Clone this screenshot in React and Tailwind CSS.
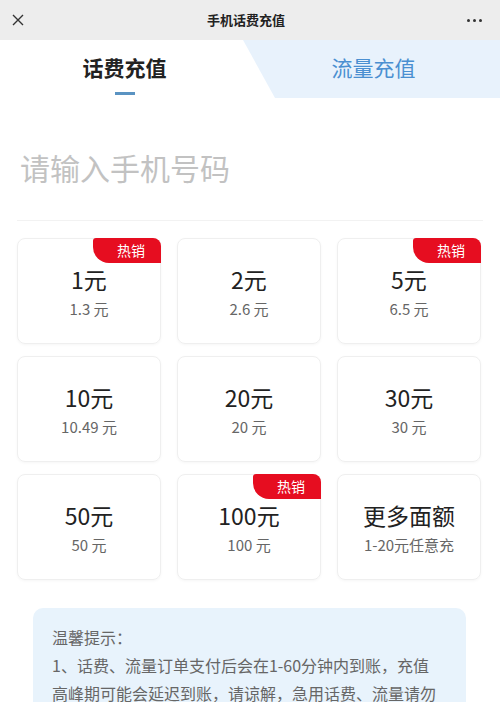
import React from 'react'

const CARDS = [
  { price: '1元', sub: '1.3 元', hot: true },
  { price: '2元', sub: '2.6 元' },
  { price: '5元', sub: '6.5 元', hot: true },
  { price: '10元', sub: '10.49 元' },
  { price: '20元', sub: '20 元' },
  { price: '30元', sub: '30 元' },
  { price: '50元', sub: '50 元' },
  { price: '100元', sub: '100 元', hot: true },
  { price: '更多面额', sub: '1-20元任意充' },
]

const font = { fontFamily: '"Noto Sans CJK SC", "Noto Sans", sans-serif' }

export default function App() {
  return (
    <div className="w-[500px] h-[702px] overflow-hidden bg-white" style={font}>
      {/* top bar */}
      <div className="h-10 bg-[#ededed] flex items-center justify-between px-[10px]">
        <svg width="14" height="14" viewBox="0 0 14 14" className="ml-[1px]">
          <path d="M2 2 L12 12 M12 2 L2 12" stroke="#333" strokeWidth="1.4" fill="none" />
        </svg>
        <div className="text-[13px] font-bold text-[#222]">手机话费充值</div>
        <div className="flex gap-[3px] mr-[8px]">
          <span className="w-[3px] h-[3px] rounded-full bg-[#333]" />
          <span className="w-[3px] h-[3px] rounded-full bg-[#333]" />
          <span className="w-[3px] h-[3px] rounded-full bg-[#333]" />
        </div>
      </div>

      {/* tabs */}
      <div className="flex h-[58px]">
        <div className="w-[243px] flex flex-col items-center pt-[12px]">
          <div className="text-[21px] leading-[30px] font-bold text-[#222] pl-[6px]">话费充值</div>
          <div className="mt-[10px] w-[20px] h-[3px] bg-[#5a93c2] ml-[6px]" />
        </div>
        <div className="flex-1 bg-[#e8f2fc] [clip-path:polygon(0_0,100%_0,100%_100%,32px_100%)] flex justify-center pt-[12px]">
          <div className="text-[21px] leading-[30px] text-[#4a8fd1] pl-[4px]">流量充值</div>
        </div>
      </div>

      {/* phone input */}
      <div className="mx-[17px] h-[123px] border-b border-[#f2f2f2] flex items-start pt-[49px]">
        <div className="text-[30px] leading-[40px] text-[#c2c2c2] pl-[3px]">请输入手机号码</div>
      </div>

      {/* cards */}
      <div className="grid grid-cols-3 gap-x-[16px] gap-y-[12px] px-[17px] pt-[17px] pr-[19px]">
        {CARDS.map(c => (
          <div
            key={c.price}
            className="relative h-[106px] rounded-[8px] border border-[#efefef] shadow-[0_1px_3px_rgba(0,0,0,0.04)] flex flex-col items-center pt-[25px]"
          >
            {c.hot && (
              <div className="absolute -top-px -right-px w-[68px] h-[25px] bg-[#e60d20] rounded-tr-[8px] rounded-bl-[16px] rounded-tl-[3px] flex items-center justify-end pr-[16px] text-white text-[14px]">
                热销
              </div>
            )}
            <div className="text-[23px] leading-[30px] text-[#222]">{c.price}</div>
            <div className="mt-[5px] text-[15px] leading-[20px] text-[#666]">{c.sub}</div>
          </div>
        ))}
      </div>

      {/* tips */}
      <div className="mx-[33px] mr-[34px] mt-[28px] bg-[#e8f3fc] rounded-[10px] px-[19px] pt-[15px] pb-4 text-[16px] leading-[28px] text-[#666]">
        <div>温馨提示：</div>
        <div>
          1、话费、流量订单支付后会在1-60分钟内到账，充值
          <br />
          高峰期可能会延迟到账，请谅解，急用话费、流量请勿
          <br />
          使用此渠道充值。
        </div>
      </div>
    </div>
  )
}
